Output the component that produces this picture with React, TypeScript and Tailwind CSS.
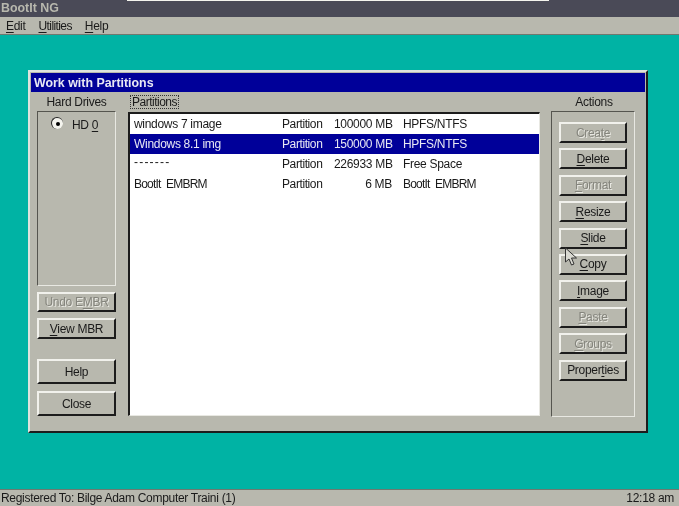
import React from 'react';

const font = "font-['Liberation_Sans',Arial,sans-serif]";

const Mn: React.FC<{ children: React.ReactNode }> = ({ children }) => (
  <span className="underline underline-offset-2 decoration-1">{children}</span>
);

interface BtnProps {
  disabled?: boolean;
  className?: string;
  children: React.ReactNode;
}

// raised win95 style button
const Btn: React.FC<BtnProps> = ({ disabled, className, children }) => (
  <div
    className={`flex items-center justify-center whitespace-nowrap border-t-2 border-l-2 border-t-[#f1f1ec] border-l-[#f1f1ec] border-b-2 border-r-2 border-b-[#1c1c1c] border-r-[#1c1c1c] bg-[#b8b8ae] ${
      disabled ? 'text-[#85857d] [text-shadow:1px_1px_0_#e8e8e2]' : 'text-[#1a1a1a]'
    } ${className ?? ''}`}
  >
    <span>{children}</span>
  </div>
);

const rows = [
  { name: 'windows 7 image', size: '100000 MB', fs: 'HPFS/NTFS' },
  { name: 'Windows 8.1 img', size: '150000 MB', fs: 'HPFS/NTFS', selected: true },
  { name: '-------', size: '226933 MB', fs: 'Free Space', dash: true },
  { name: 'BootIt EMBRM', size: '6 MB', fs: 'BootIt EMBRM', tight: true },
];

const actions: { pre?: string; mn: string; post: string; disabled?: boolean }[] = [
  { pre: 'Crea', mn: 't', post: 'e', disabled: true },
  { mn: 'D', post: 'elete' },
  { mn: 'F', post: 'ormat', disabled: true },
  { mn: 'R', post: 'esize' },
  { mn: 'S', post: 'lide' },
  { mn: 'C', post: 'opy' },
  { mn: 'I', post: 'mage' },
  { mn: 'P', post: 'aste', disabled: true },
  { mn: 'G', post: 'roups', disabled: true },
  { pre: 'Proper', mn: 't', post: 'ies' },
];

export default function App() {
  return (
    <div className={`${font} w-[679px] h-[506px] overflow-hidden flex flex-col bg-[#00b3a4] text-[12px] tracking-[-0.3px] text-[#1a1a1a] blur-[0.3px]`}>
      {/* app title bar */}
      <div className="h-[17px] bg-[#4a4a57] relative flex items-center pl-[1px]">
        <div className="absolute top-0 left-[127px] w-[422px] h-[1px] bg-[#f4f4ee]" />
        <span className="text-[12.4px] font-bold tracking-normal text-[#b8b8ae]">BootIt NG</span>
      </div>

      {/* menu bar */}
      <div className="h-[18px] bg-[#b8b8ae] border-b border-[#70786f] flex items-center pl-[6px] gap-[13px]">
        <span><Mn>E</Mn>dit</span>
        <span className="tracking-[-0.6px]"><Mn>U</Mn>tilities</span>
        <span><Mn>H</Mn>elp</span>
      </div>

      {/* desktop */}
      <div className="flex-1 pt-[35px] pl-[28px]">
        <div className="w-[620px] h-[363px] border-2 border-t-[#dfe3dd] border-l-[#dfe3dd] border-b-[#1c1c1c] border-r-[#1c1c1c] bg-[#b8b8ae] p-[1px]">
          <div className="h-[19px] bg-[#000099] flex items-center pl-[3px] pt-[2px] text-[12.4px] font-bold tracking-normal text-[#e8e8f4]">
            Work with Partitions
          </div>

          <div className="flex pl-[6px]">
            {/* hard drives */}
            <div className="w-[79px] shrink-0 flex flex-col">
              <div className="h-[19px] flex items-center justify-center">Hard Drives</div>
              <div className="h-[175px] border border-t-[#55554f] border-l-[#55554f] border-b-[#e8e8e2] border-r-[#e8e8e2] flex items-start pt-[4px] pl-[13px] gap-[9px]">
                <div className="w-[12px] h-[12px] mt-[1px] rounded-full bg-[#f4f4ee] border-t border-l border-[#222] flex items-center justify-center">
                  <div className="w-[4px] h-[4px] rounded-full bg-black" />
                </div>
                <span>HD <Mn>0</Mn></span>
              </div>
              <Btn disabled className="h-[20px] mt-[6px]">Undo E<Mn>M</Mn>BR</Btn>
              <Btn className="h-[21px] mt-[6px]"><Mn>V</Mn>iew MBR</Btn>
              <Btn className="h-[25px] mt-[20px]">Help</Btn>
              <Btn className="h-[25px] mt-[7px]">Close</Btn>
            </div>

            {/* partitions */}
            <div className="w-[412px] ml-[12px] shrink-0 flex flex-col">
              <div className="h-[20px] pt-[3px] pl-[2px] flex">
                <span className="h-[14px] px-[1px] leading-[12px] border border-dotted border-[#333] tracking-[-0.5px]">Partitions</span>
              </div>
              <div className="h-[304px] bg-white border-t-2 border-l-2 border-[#1c1c1c] border-r border-r-[#e8e8e2] border-b border-b-[#e8e8e2]">
                {rows.map((r) => (
                  <div
                    key={r.name}
                    className={`h-[20px] flex items-center pl-[4px] whitespace-nowrap ${r.selected ? 'bg-[#000099] text-[#e8e8f4]' : ''}`}
                  >
                    <span className={`w-[148px] ${r.dash ? '-mt-[4px] tracking-[1.2px]' : ''} ${r.tight ? 'tracking-[-0.8px] [word-spacing:3px]' : ''}`}>{r.name}</span>
                    <span className="w-[52px] tracking-[-0.4px]">Partition</span>
                    <span className="w-[58px] text-right">{r.size}</span>
                    <span className={`ml-[11px] ${r.tight ? 'tracking-[-0.8px] [word-spacing:3px]' : ''}`}>{r.fs}</span>
                  </div>
                ))}
              </div>
            </div>

            {/* actions */}
            <div className="w-[84px] ml-[11px] shrink-0 flex flex-col">
              <div className="h-[19px] flex items-center justify-center pl-[2px]">Actions</div>
              <div className="h-[306px] border border-t-[#55554f] border-l-[#55554f] border-b-[#e8e8e2] border-r-[#e8e8e2] pt-[10px] px-[7px] flex flex-col gap-[5.4px]">
                {actions.map((a) => (
                  <Btn key={a.pre ?? a.mn} disabled={a.disabled} className="h-[21px] shrink-0">
                    {a.pre}<Mn>{a.mn}</Mn>{a.post}
                  </Btn>
                ))}
              </div>
            </div>
          </div>
        </div>
      </div>

      {/* status bar */}
      <div className="h-[17px] bg-[#b8b8ae] border-t border-[#70786f] flex items-center justify-between pl-[1px] pr-[5px]">
        <span>Registered To: Bilge Adam Computer Traini (1)</span>
        <span>12:18 am</span>
      </div>

      {/* mouse pointer */}
      <svg className="absolute left-[564px] top-[247px]" width="14" height="20" viewBox="0 0 14 20">
        <path d="M1.5 1 L1.5 15 L5 12 L7.5 18 L10 17 L7.5 11 L12.5 11 Z" fill="#d8d8d0" stroke="#333" strokeWidth="1" />
      </svg>
    </div>
  );
}
